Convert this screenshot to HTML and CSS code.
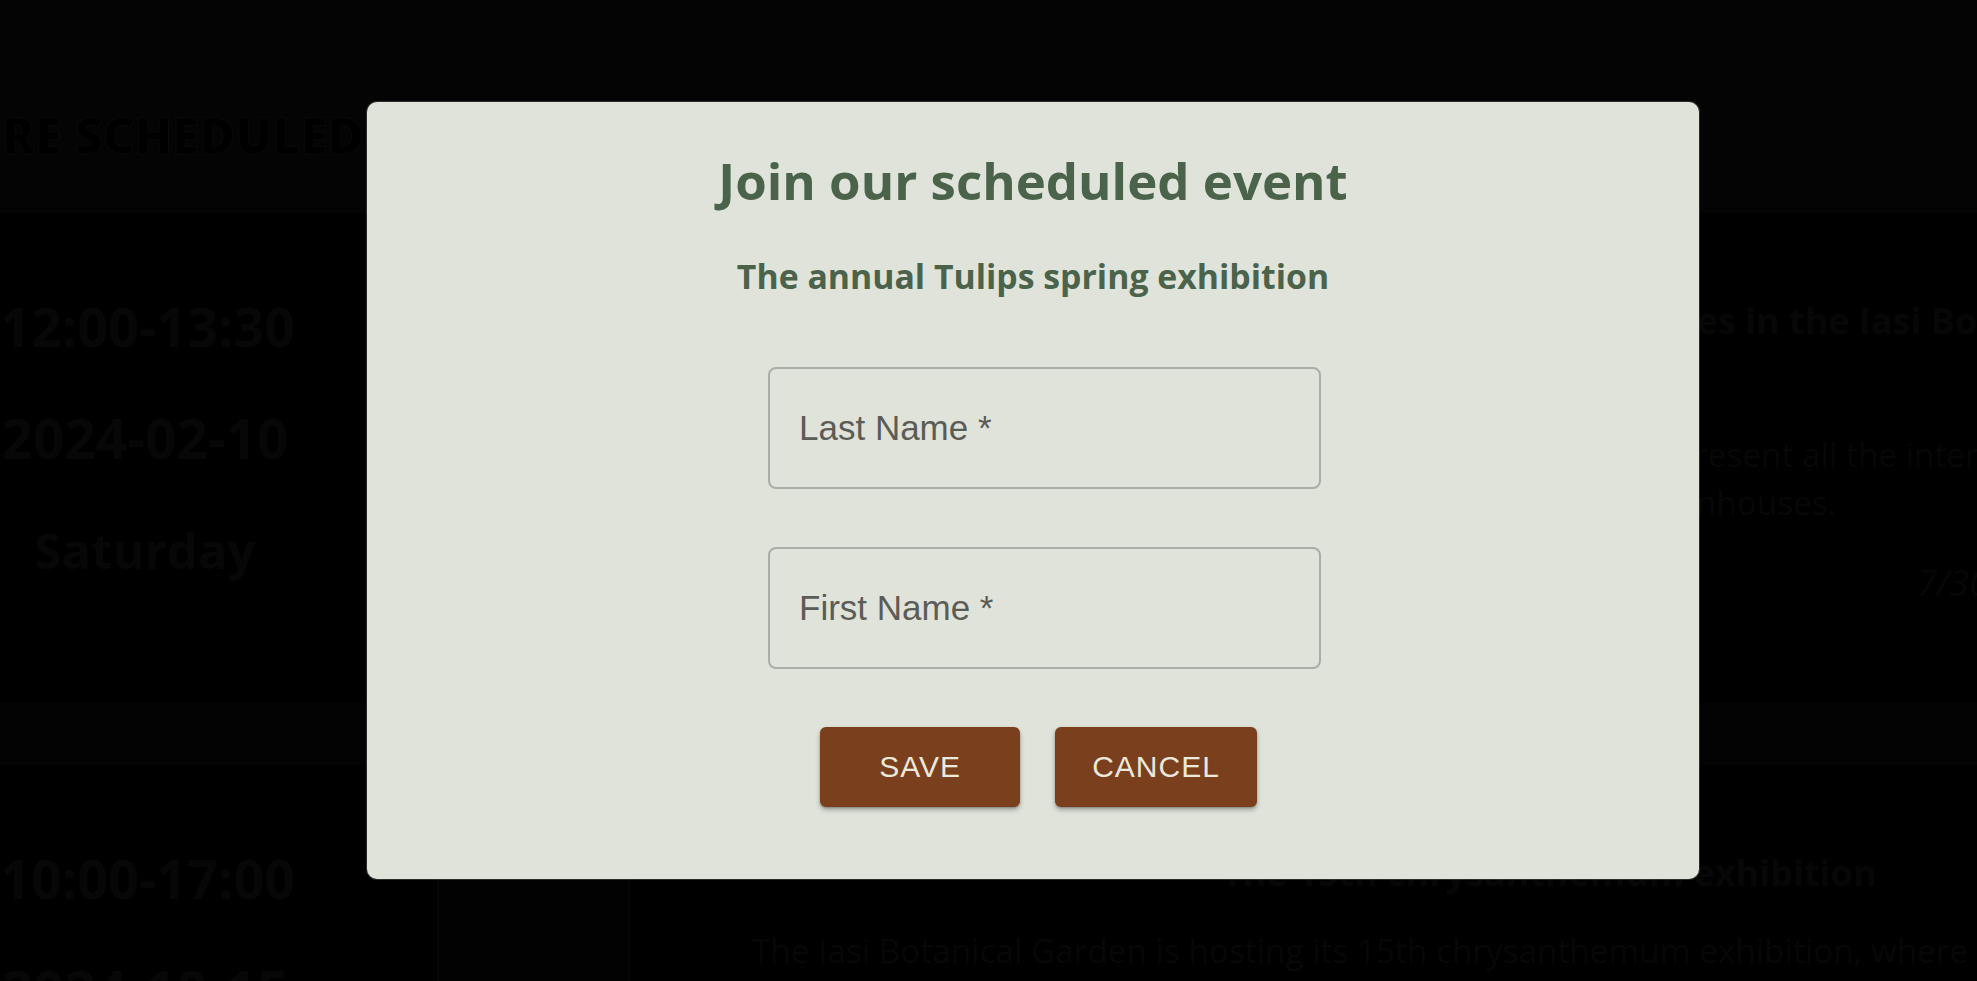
FILE: index.html
```html
<!DOCTYPE html>
<html lang="en">
<head>
<meta charset="utf-8">
<title>Join our scheduled event</title>
<link rel="stylesheet" href="styles.css">
</head>
<body>
<div class="page">
  <header class="hero">
    <h1 class="hero-title">WHAT EVENTS ARE SCHEDULED</h1>
  </header>

  <section class="event">
    <div class="when">
      <div class="time">12:00-13:30</div>
      <div class="date">2024-02-10</div>
      <div class="day">Saturday</div>
    </div>
    <div class="thumb"></div>
    <div class="info">
      <h2 class="event-title">Tulips blooming times in the Iasi Botanical Garden</h2>
      <p class="event-text event-text-first">The Iasi Botanical Garden's spring exhibition will present all the interesting tulip varieties<br>grown over the years in its two lovely tropical greenhouses.</p>
      <div class="count">7/30</div>
    </div>
  </section>

  <div class="divider"></div>

  <section class="event">
    <div class="when">
      <div class="time">10:00-17:00</div>
      <div class="date">2024-10-15</div>
      <div class="day">Tuesday</div>
    </div>
    <div class="thumb"></div>
    <div class="info">
      <h2 class="event-title event-title-second">The 15th chrysanthemum exhibition</h2>
      <p class="event-text">The Iasi Botanical Garden is hosting its 15th chrysanthemum exhibition, where</p>
    </div>
  </section>
</div>

<div class="modal" role="dialog" aria-labelledby="modal-title">
  <h2 class="modal-title" id="modal-title">Join our scheduled event</h2>
  <h3 class="modal-subtitle">The annual Tulips spring exhibition</h3>
  <div class="fields">
    <div class="field"><span class="field-label">Last Name *</span></div>
    <div class="field"><span class="field-label">First Name *</span></div>
  </div>
  <div class="actions">
    <button class="btn" type="button">SAVE</button>
    <button class="btn" type="button">CANCEL</button>
  </div>
</div>
</body>
</html>
```

FILE: styles.css
```css
html, body {
  margin: 0;
  padding: 0;
}

body {
  width: 1977px;
  height: 981px;
  overflow: hidden;
  background: #000;
  font-family: "Open Sans", "Noto Sans", sans-serif;
  position: relative;
}

.page {
  width: 1977px;
}

/* ---------- dimmed background page ---------- */
.hero {
  height: 213px;
  background: #040404;
  overflow: hidden;
}

.hero-title {
  margin: 0 0 0 -398px;
  padding-top: 105px;
  font-size: 49px;
  line-height: 60px;
  font-weight: 800;
  color: #000;
  -webkit-text-stroke: 1px #0a0a0a;
  white-space: nowrap;
}

.event {
  display: grid;
  grid-template-columns: 437px 193px 1347px;
  height: 490px;
  overflow: hidden;
}

.event + .divider + .event {
  height: 300px;
}

.when {
  width: 290px;
  padding-top: 57px;
  text-align: center;
  color: #070707;
  font-weight: 700;
  white-space: nowrap;
}

.time {
  font-size: 54px;
  line-height: 112px;
}

.date {
  font-size: 55px;
  line-height: 112px;
}

.day {
  font-size: 49px;
  line-height: 112px;
}

.thumb {
  background: #020202;
  border-left: 2px solid #060606;
  border-right: 2px solid #060606;
}

.info {
  padding-left: 122px;
  color: #070707;
}

.event-title {
  margin: 84px 0 0;
  font-size: 36px;
  line-height: 48px;
  font-weight: 700;
  white-space: nowrap;
  padding-left: 588px;
}

.event-title-second {
  padding-left: 470px;
}

.event-text {
  margin: 29px 0 0;
  font-size: 33.3px;
  line-height: 48px;
  font-weight: 400;
  width: 1240px;
}

.event-text-first {
  margin-top: 85px;
  padding-left: 167px;
  white-space: nowrap;
}

.count {
  margin-top: 32px;
  text-align: right;
  font-size: 36px;
  font-style: italic;
  margin-right: -12px;
}

.divider {
  height: 62px;
  background: #030303;
}

/* ---------- modal ---------- */
.modal {
  position: absolute;
  left: 367px;
  top: 102px;
  width: 1332px;
  height: 777px;
  box-sizing: border-box;
  padding-top: 46px;
  background: #e0e3da;
  border-radius: 10px;
  box-shadow: 0 0 0 1px rgba(120, 125, 115, 0.35);
  display: flex;
  flex-direction: column;
  align-items: center;
}

.modal-title {
  margin: 0;
  font-size: 51px;
  line-height: 64px;
  font-weight: 700;
  color: #4b634a;
}

.modal-subtitle {
  margin: 40px 0 0;
  font-size: 33.8px;
  line-height: 48px;
  font-weight: 700;
  color: #4b634a;
}

.fields {
  display: flex;
  flex-direction: column;
  gap: 58px;
  margin-top: 67px;
  margin-left: 23px;
}

.field {
  width: 553px;
  height: 122px;
  box-sizing: border-box;
  border: 2px solid #abaea6;
  border-radius: 8px;
  display: flex;
  align-items: center;
  padding-left: 29px;
}

.field-label {
  font-family: "Liberation Sans", Arial, sans-serif;
  font-size: 35px;
  color: #5b5c55;
}

.actions {
  display: flex;
  gap: 35px;
  margin-top: 58px;
  margin-left: 11px;
}

.btn {
  min-width: 200px;
  height: 80px;
  box-sizing: border-box;
  padding: 0 37px;
  border: 0;
  border-radius: 6px;
  background: #7a3f1c;
  color: #ebe8dc;
  font-family: "Liberation Sans", Arial, sans-serif;
  font-size: 30px;
  letter-spacing: 1px;
  box-shadow: 0 3px 5px rgba(0, 0, 0, 0.28), 0 1px 2px rgba(0, 0, 0, 0.2);
  cursor: pointer;
}
```
